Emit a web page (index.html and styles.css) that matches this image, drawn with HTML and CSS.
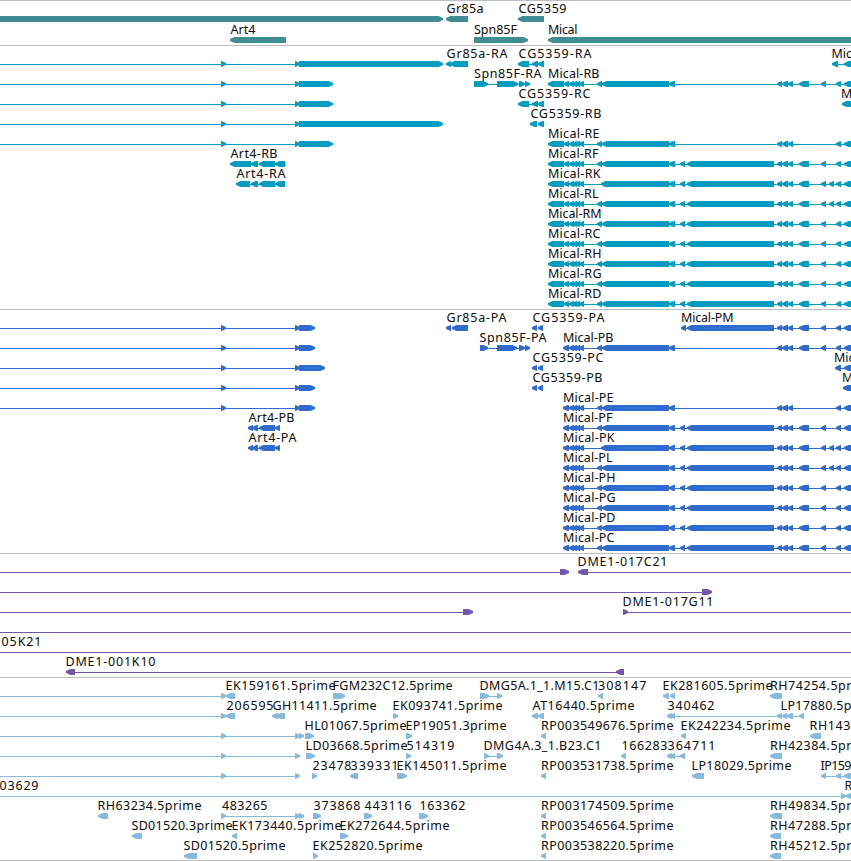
FILE: index.html
```
<!DOCTYPE html>
<html lang="en">
<head>
<meta charset="utf-8">
<title>Genome tracks</title>
<link rel="stylesheet" href="styles.css">
</head>
<body>
<main class="browser" id="browser"></main>
<script src="tracks.js"></script>
</body>
</html>
```

FILE: styles.css
```
body {
  margin: 0;
  background: #fff;
  overflow: hidden;
}

.browser {
  display: flex;
  flex-direction: column;
  width: 851px;
  height: 861px;
  border-bottom: 1px solid #bebebe;
  box-sizing: border-box;
  overflow: hidden;
}

.track {
  flex: none;
  border-top: 1px solid #bebebe;
}

.track svg {
  display: block;
  width: 851px;
  height: 100%;
  overflow: hidden;
}

.track text {
  font-family: "Noto Sans", "DejaVu Sans", sans-serif;
  font-size: 12.5px;
  fill: #0c0c0c;
}

.track rect {
  shape-rendering: crispEdges;
}

.genes { height: 44px; fill: #408e94; }
.transcripts { height: 263px; fill: #009dc0; }
.proteins { height: 243px; fill: #306ccd; }
.clones { height: 123px; fill: #7457a8; }
.reads { height: 182px; fill: #87bbdd; }
```

FILE: tracks.js
```
// A feature is "label,x,endX | direction | lineStart-lineEnd | box box ...".
// Label or line may be empty; every box is start-end in pixels.
const tail = "777-782 782-788 788-793";
const end = "836-841 844-857";
const utr = "548-564 564-569 569-574 572-577 575-580 579-584";
const cds = "563-569 569-574 572-577 575-580 579-584";
const mid = "669-675 680-685 687-774";
const full = s => `${s} 597-602 602-669 ${mid} ${tail} 799-809 821-826 ${end}`;
const extra = s => `${s} 597-602 602-669 ${mid} ${tail} 799-809 821-826 829-834 ${end}`;
const merged = s => `${s} 601-669 ${mid} ${tail} 799-809 821-826 829-834 ${end}`;
const gap = s => `${s} 597-602 602-669 669-675 ${tail} 799-809 821-826 ${end}`;
const gapShort = s => `${s} 597-602 602-669 669-675 ${tail} ${end}`;
const r = (name, w, boxes) => `${name},547.5,${w}|<|548-851|${boxes(utr)}`;
const p = (name, w, boxes) => `${name},562.5,${w}|<|563-851|${boxes(cds)}`;
const left = e => `|>|0-299|221-226 295-300 299-${e}`;
const rp = (name) => `${name},540.5,674|<||541-546`;

const tracks = [
  { name: "genes", pitch: 21, rows: [
    ["|>||0-443", "Gr85a,446,484|<||446-468", "CG5359,518,567|<||518-544"],
    ["Art4,230,256|<||230-286", "Spn85F,473.5,517.5|>||474-528", "Mical,547.5,578|<||548-860"]
  ]},
  { name: "transcripts", pitch: 20, rows: [
    [left(443), "Gr85a-RA,446,508|<||446-451 450-468", "CG5359-RA,518,592|<|518-544|518-529 532-538 538-544", "Mic,831,851|<|832-851|832-838 844-857"],
    [left(333), "Spn85F-RA,473.5,542|>|474-530|474-488 497-518 519-525 525-530", r("Mical-RB", 600, gap)],
    [left(333), "CG5359-RC,518,591|<|518-544|518-529 532-538 538-544", "M,840.5,851|<||842-857"],
    [left(443), "CG5359-RB,530,602|<||530-537 538-544"],
    [left(333), r("Mical-RE", 600, gapShort)],
    ["Art4-RB,230,278|<|230-286|230-251 251-258 259-275 275-285", r("Mical-RF", 599, full)],
    ["Art4-RA,236,286|<|236-285|236-250 251-258 259-275 275-285", r("Mical-RK", 601, merged)],
    [r("Mical-RL", 599, extra)],
    [r("Mical-RM", 602, full)],
    [r("Mical-RC", 601, full)],
    [r("Mical-RH", 602, full)],
    [r("Mical-RG", 602, full)],
    [r("Mical-RD", 602, full)]
  ]},
  { name: "proteins", pitch: 20, rows: [
    [left(315), "Gr85a-PA,446,507|<||446-451 452-468", "CG5359-PA,532,605|<||532-537 538-543", `Mical-PM,680.5,734|<|681-851|681-686 687-774 ${tail} 799-809 821-826 ${end}`],
    [left(315), "Spn85F-PA,479,547|>|480-530|480-488 497-517 519-525 525-530", p("Mical-PB", 614, gap)],
    [left(325), "CG5359-PC,532,604|<||532-537 538-543", "Mic,833.5,852|<|835-851|835-841 844-857"],
    [left(315), "CG5359-PB,532,603|<||532-537 538-543", "M,841.5,853|<||843-857"],
    [left(315), p("Mical-PE", 614, gapShort)],
    ["Art4-PB,248,295|<|248-280|248-253 252-258 259-275 275-280", p("Mical-PF", 613, full)],
    ["Art4-PA,248,297|<|248-280|248-253 252-258 259-275 275-280", p("Mical-PK", 615, merged)],
    [p("Mical-PL", 613, extra)],
    [p("Mical-PH", 616, full)],
    [p("Mical-PG", 616, full)],
    [p("Mical-PD", 616, full)],
    [p("Mical-PC", 615, full)]
  ]},
  { name: "clones", pitch: 20, rows: [
    ["|>|0-564|560-569", "DME1-017C21,577,668|<|582-851|578-588"],
    ["|>|0-706|702-712"],
    ["|>|0-467|463-473", "DME1-017G11,622,714|>|623-851|623-628"],
    ["|>|0-851|"],
    ["05K21,1,42|>|0-851|"],
    ["DME1-001K10,65,156|<|70-620|66-75 616-624"]
  ]},
  { name: "reads", pitch: 20, rows: [
    ["|>|0-224|221-226", "EK159161.5prime,225,336|<||226-235", "FGM232C12.5prime,332,453|>||333-345", "DMG5A.1_1.M15.C1,479,600|>|480-500|480-489 497-502", "308147,597.5,647|<||598-603", "EK281605.5prime,662,773|<||663-669 670-675", "RH74254.5pr,769.5,852|<||770-782"],
    ["|>|0-224|221-226", "206595,226,274|<||226-235", "GH11411.5prime,272,377|<||272-278 276-285", "EK093741.5prime,392,503|>||393-398", "AT16440.5prime,532,635|<||532-538 538-544", "340462,667,715|<|670-782|667-672 670-675 777-782", "LP17880.5p,780,852|<|782-804|782-787 787-793 799-804"],
    ["|>|0-300|221-226 295-300 299-304", "HL01067.5prime,304,407|>||305-314", "EP19051.3prime,405,507|>||406-412", rp("RP003549676.5prime"), "EK242234.5prime,680,791|<||681-686", "RH143,809,851|<||810-821"],
    ["|>|0-300|221-226 295-300", "LD03668.5prime,305,408|>||306-315", "514319,406,455|>||406-411", "DMG4A.3_1.B23.C1,483,602|>|484-500|484-489 497-503", "166283,621,668|<||621-626", "364711,667,716|<|667-685|667-672 670-675 680-685", "RH42384.5pr,769.5,852|<||770-782"],
    ["|>|0-300|221-226 295-300", "23478,312,352|>||312-317", "339331,350,399|<||350-358", "EK145011.5prime,396,507|>||397-407", rp("RP003531738.5prime"), "LP18029.5prime,691,792|<||692-704", "IP159,820,852|<|821-851|821-826 836-841 844-857"],
    ["03629,-1,39|>|0-845|841-846", "R,844,853|<||846-857"],
    ["RH63234.5prime,97,202|<||98-108", "483265,221.5,268|>|221-300|221-226 295-300 299-304", "373868,313,361|>||313-321", "443116,364,412|>||364-372", "163362,419,466|>||419-428", rp("RP003174509.5prime"), "RH49834.5pr,769.5,852|<||770-782"],
    ["SD01520.3prime,131,233|<||132-142", "EK173440.5prime,231,342|<||232-237", "EK272644.5prime,339,450|>||340-348", rp("RP003546564.5prime"), "RH47288.5pr,769.5,852|<||770-781"],
    ["SD01520.5prime,183,286|<||184-197", "EK252820.5prime,312,423|>||313-318", rp("RP003538220.5prime"), "RH45212.5pr,769.5,852|<||770-781"]
  ]}
];

// Box with a five-pixel arrowhead on the side the feature is read towards.
function arrow(a, b, dir, y) {
  const h = Math.min(5, b - a);
  return dir === ">"
    ? `M${a} ${y}H${b - h + 0.5}L${b} ${y + 2}V${y + 4}L${b - h + 0.5} ${y + 6}H${a}Z`
    : `M${b} ${y}H${a + h - 0.5}L${a} ${y + 2}V${y + 4}L${a + h - 0.5} ${y + 6}H${b}Z`;
}

function feature(spec, y) {
  const [label, dir, line, boxes] = spec.split("|");
  let out = "";
  if (line) {
    const [a, b] = line.split("-").map(Number);
    out += `<rect x="${a}" y="${y + 18}" width="${b - a}" height="1"/>`;
  }
  if (boxes) {
    out += boxes.split(" ").map(s => {
      const [a, b] = s.split("-").map(Number);
      return `<path d="${arrow(a, b, dir, y + 15)}"/>`;
    }).join("");
  }
  if (label) {
    const [name, x, e] = label.split(",");
    const fit = name.length > 3 ? ` textLength="${e - x - 1}"` : "";
    out += `<text x="${+x + 0.5}" y="${y + 12}"${fit}>${name}</text>`;
  }
  return out;
}

document.getElementById("browser").innerHTML = tracks.map(t =>
  `<section class="track ${t.name}"><svg>${t.rows.map((row, i) =>
    row.map(f => feature(f, i * t.pitch)).join("")).join("")}</svg></section>`
).join("");
```
